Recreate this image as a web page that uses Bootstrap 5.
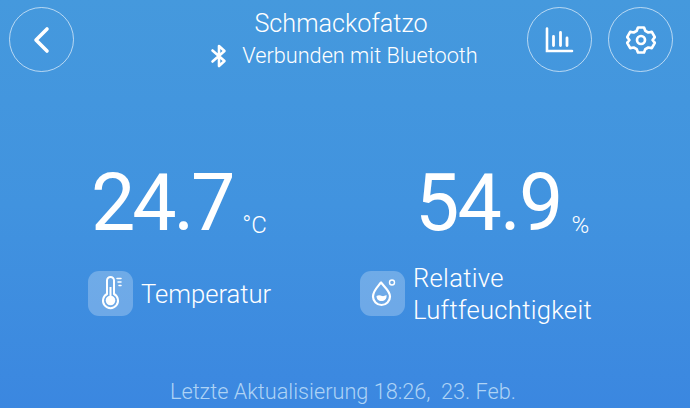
<!DOCTYPE html>
<html lang="de">
<head>
<meta charset="utf-8">
<title>Schmackofatzo</title>
<link href="https://cdn.jsdelivr.net/npm/bootstrap@5.3.0/dist/css/bootstrap.min.css" rel="stylesheet">
<style>
html,body{height:408px;overflow:hidden}
body{width:690px;background:linear-gradient(180deg,#4599dd 0%,#4193df 50%,#3b87e0 100%);color:#fff;font-family:"Roboto","Liberation Sans",sans-serif;font-weight:400}
.screen{height:408px}
.top-bar{padding:7px 17px 0 9px}
.side-slot{width:147px;flex:none}
.round-btn{width:65px;height:65px;border:1px solid rgba(255,255,255,.62);border-radius:50%;background:transparent;padding:0}
.round-btn svg{display:block}
.dev-name{font-size:25.2px;line-height:30px;margin-top:2px;font-weight:300}
.dev-state{font-size:21.7px;line-height:28px;margin-top:3px;font-weight:300;white-space:nowrap;margin-left:6px}
.state-ic{margin-right:14px}
.metrics{margin-top:91px;padding-left:88px}
.metric-a{width:272px}
.num-row{height:80px}
.num{font-size:79px;line-height:80px;letter-spacing:-3.2px}
.unit{font-size:24px;line-height:28px;margin-bottom:4px;font-weight:300}
.num-a{margin-left:3px}
.unit-a{margin-left:10px}
.num-b{margin-left:55px;letter-spacing:-1.9px}
.unit-b{margin-left:10px}
.label-row{margin-top:18px;height:64px}
.ic-tile{width:45px;height:45px;border-radius:11px;background:rgba(255,255,255,.25);flex:none}
.lbl{font-size:25.6px;line-height:32px;margin-left:8px;padding-top:2px;font-weight:300}
.lbl-wide{letter-spacing:.3px}
.foot{margin-top:auto;font-size:21.7px;line-height:26px;color:#aed3f5;padding-bottom:3px;padding-right:4px;font-weight:300}
</style>
</head>
<body>
<div class="screen d-flex flex-column">
  <div class="top-bar d-flex justify-content-between align-items-start">
    <div class="side-slot">
      <button class="round-btn btn d-flex align-items-center justify-content-center" aria-label="Zurück">
        <svg width="20" height="28" viewBox="0 0 20 28"><path d="M15 3 4 14l11 11" fill="none" stroke="#fff" stroke-width="3.600" stroke-linecap="round" stroke-linejoin="round"/></svg>
      </button>
    </div>
    <div class="flex-grow-1 text-center">
      <div class="dev-name">Schmackofatzo</div>
      <div class="dev-state d-flex justify-content-center align-items-center">
        <svg class="state-ic" width="18" height="24" viewBox="0 0 18 24"><path d="M2.500 6.500 14.500 17 9 22V2l5.500 5L2.500 17.500" fill="none" stroke="#fff" stroke-width="2.600" stroke-linejoin="round" stroke-linecap="round"/></svg>
        <span>Verbunden mit Bluetooth</span>
      </div>
    </div>
    <div class="side-slot d-flex gap-3 justify-content-end">
      <button class="round-btn btn d-flex align-items-center justify-content-center" aria-label="Statistik">
        <svg width="30" height="30" viewBox="0 0 30 30"><path d="M2 3.500v22.500h25" fill="none" stroke="#fff" stroke-width="2.600" stroke-linecap="round"/><path d="M8.500 11.500v9M15.500 7.500v13M22 13v7.500" fill="none" stroke="#fff" stroke-width="2.800" stroke-linecap="round"/></svg>
      </button>
      <button class="round-btn btn d-flex align-items-center justify-content-center" aria-label="Einstellungen">
        <svg width="30" height="30" viewBox="0 0 30 30"><path d="M12 2.500h6l1.300 3.300 3 1.700 3.500-.6 3 5.200-2.200 2.900 2.200 2.900-3 5.200-3.500-.6-3 1.700-1.300 3.300h-6l-1.300-3.300-3-1.700-3.500.6-3-5.200 2.200-2.900-2.200-2.900 3-5.200 3.500.6 3-1.700z" fill="none" stroke="#fff" stroke-width="2.700" stroke-linejoin="round"/><circle cx="15" cy="15" r="4" fill="none" stroke="#fff" stroke-width="2.700"/></svg>
      </button>
    </div>
  </div>

  <div class="metrics d-flex">
    <div class="metric-a">
      <div class="num-row d-flex align-items-end">
        <span class="num num-a">24.7</span><span class="unit unit-a">°C</span>
      </div>
      <div class="label-row d-flex align-items-center">
        <div class="ic-tile d-flex align-items-center justify-content-center">
          <svg width="26" height="36" viewBox="0 0 26 36"><path d="M9 5.500a3.500 3.500 0 0 1 7 0V19a7.500 7.500 0 1 1-7 0z" fill="none" stroke="#fff" stroke-width="2"/><circle cx="12.500" cy="25.500" r="4.800" fill="#fff"/><path d="M12.500 12v12" stroke="#fff" stroke-width="2"/><path d="M19 3.500h4M20 7h3M21 10.500h2" stroke="#fff" stroke-width="1.500" stroke-linecap="round"/></svg>
        </div>
        <div class="lbl">Temperatur</div>
      </div>
    </div>
    <div>
      <div class="num-row d-flex align-items-end">
        <span class="num num-b">54.9</span><span class="unit unit-b">%</span>
      </div>
      <div class="label-row d-flex align-items-center">
        <div class="ic-tile d-flex align-items-center justify-content-center">
          <svg width="28" height="30" viewBox="0 0 28 30"><path d="M12 4.500C8 9.500 4 13 4 18.500a8.500 8.500 0 0 0 17 0C21 13 16 9.500 12 4.500z" fill="none" stroke="#fff" stroke-width="2.200" stroke-linejoin="round"/><path d="M7.500 18c2.500-1.500 4-.5 5.500 0s2.500-.3 4.500-1c.5 4-2 6-5 6s-5-2-5-5z" fill="#fff"/><circle cx="23" cy="4.500" r="2.500" fill="none" stroke="#fff" stroke-width="1.400"/></svg>
        </div>
        <div class="lbl lbl-wide">Relative<br>Luftfeuchtigkeit</div>
      </div>
    </div>
  </div>

  <div class="foot text-center">Letzte Aktualisierung 18:26,&nbsp; 23. Feb.</div>
</div>
<script src="https://cdn.jsdelivr.net/npm/bootstrap@5.3.0/dist/js/bootstrap.bundle.min.js"></script>
</body>
</html>
